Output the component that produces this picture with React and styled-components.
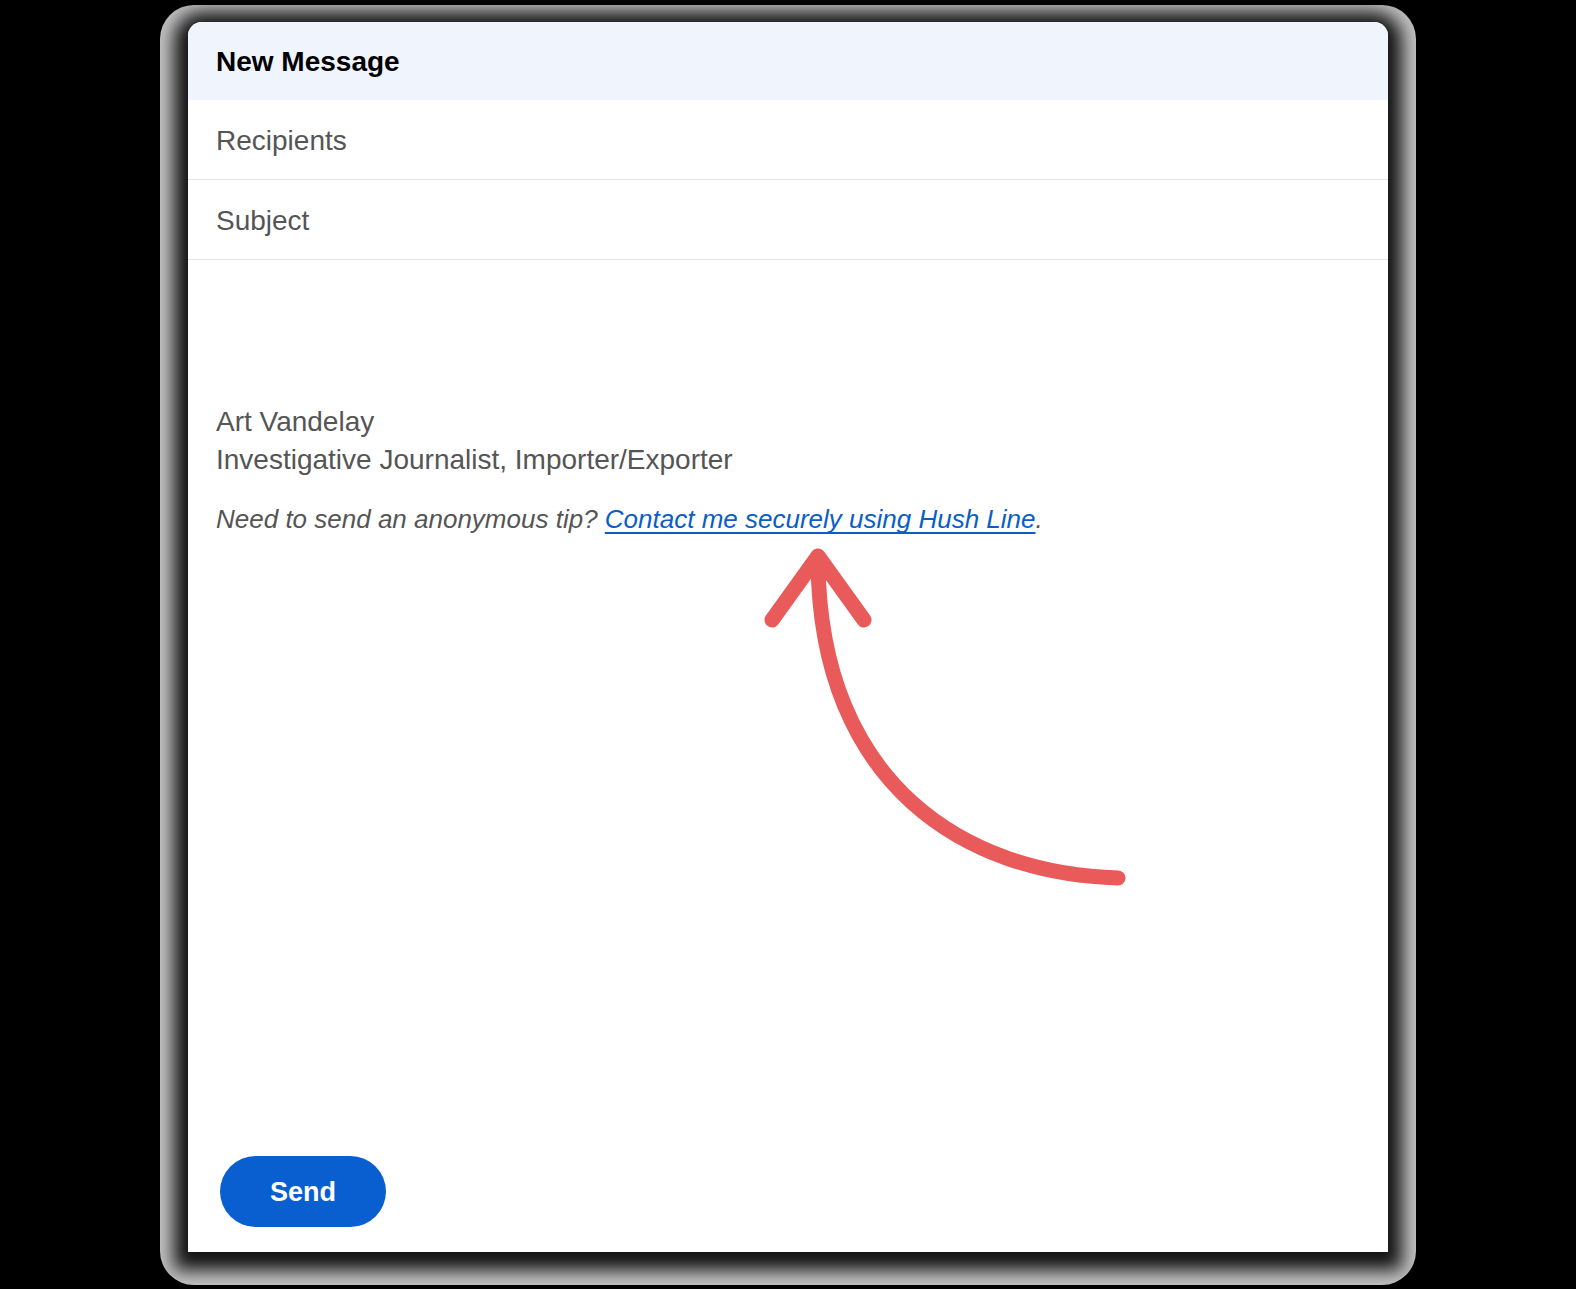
import styled, { createGlobalStyle } from 'styled-components';

const GlobalStyle = createGlobalStyle`
  html, body {
    margin: 0;
    padding: 0;
    background: #000;
  }
  body {
    font-family: "Liberation Sans", Arial, Helvetica, sans-serif;
    width: 1576px;
    height: 1289px;
    overflow: hidden;
  }
`;

const Stage = styled.div`
  display: flex;
  padding: 5px 0 0 160px;
`;

const Frame = styled.div`
  box-sizing: border-box;
  width: 1256px;
  height: 1280px;
  padding: 17px 28px 28px 28px;
  border-radius: 34px;
  background: #c4c4c4;
  overflow: hidden;
`;

const Card = styled.div`
  position: relative;
  display: flex;
  flex-direction: column;
  width: 1200px;
  height: 1230px;
  background: #fff;
  border-radius: 14px 14px 0 0;
  box-shadow: 0 4px 18px 14px #121212;
`;

const Header = styled.div`
  display: flex;
  align-items: center;
  height: 78px;
  padding: 2px 0 0 28px;
  box-sizing: border-box;
  background: #f0f4fd;
  border-radius: 14px 14px 0 0;
  font-size: 28px;
  font-weight: 700;
  color: #000;
`;

const Field = styled.div`
  display: flex;
  align-items: center;
  height: 80px;
  padding: 3px 0 0 28px;
  box-sizing: border-box;
  border-bottom: 1.5px solid #e2e2e2;
  font-size: 28px;
  color: #555;
`;

const Body = styled.div`
  flex: 1;
  padding: 143px 28px 0 28px;
  color: #555;
`;

const Signature = styled.div`
  font-size: 28px;
  line-height: 38px;
`;

const Tip = styled.p`
  margin: 21px 0 0;
  font-size: 26px;
  line-height: 38px;
  font-style: italic;

  & > a {
    color: #0b5ec6;
    text-decoration: underline;
    text-decoration-skip-ink: none;
    text-underline-offset: 4px;
    text-decoration-thickness: 2px;
  }
`;

const Footer = styled.div`
  display: flex;
  padding: 0 0 25px 32px;
`;

const SendButton = styled.button`
  width: 166px;
  height: 71px;
  padding-top: 3px;
  border: none;
  border-radius: 36px;
  background: #0a5fd0;
  color: #fff;
  font-family: inherit;
  font-size: 27px;
  font-weight: 700;
  cursor: pointer;
`;

const Annotation = styled.svg`
  position: absolute;
  left: 0;
  top: 0;
  width: 1200px;
  height: 1230px;
  pointer-events: none;
`;

const Arrow = () => (
  <Annotation viewBox="0 0 1200 1230">
    <g
      fill="none"
      stroke="#e95a5a"
      strokeWidth="15"
      strokeLinecap="round"
      strokeLinejoin="round"
    >
      <path d="M930 856 C 780 852 632 765 630 540" />
      <path d="M584 598 L 630 534 L 676 598" />
    </g>
  </Annotation>
);

export default function App() {
  return (
    <>
      <GlobalStyle />
      <Stage>
        <Frame>
          <Card>
            <Header>New Message</Header>
            <Field>Recipients</Field>
            <Field>Subject</Field>
            <Body>
              <Signature>
                <div>Art Vandelay</div>
                <div>Investigative Journalist, Importer/Exporter</div>
              </Signature>
              <Tip>
                Need to send an anonymous tip?{' '}
                <a href="#">Contact me securely using Hush Line</a>.
              </Tip>
            </Body>
            <Footer>
              <SendButton>Send</SendButton>
            </Footer>
            <Arrow />
          </Card>
        </Frame>
      </Stage>
    </>
  );
}
